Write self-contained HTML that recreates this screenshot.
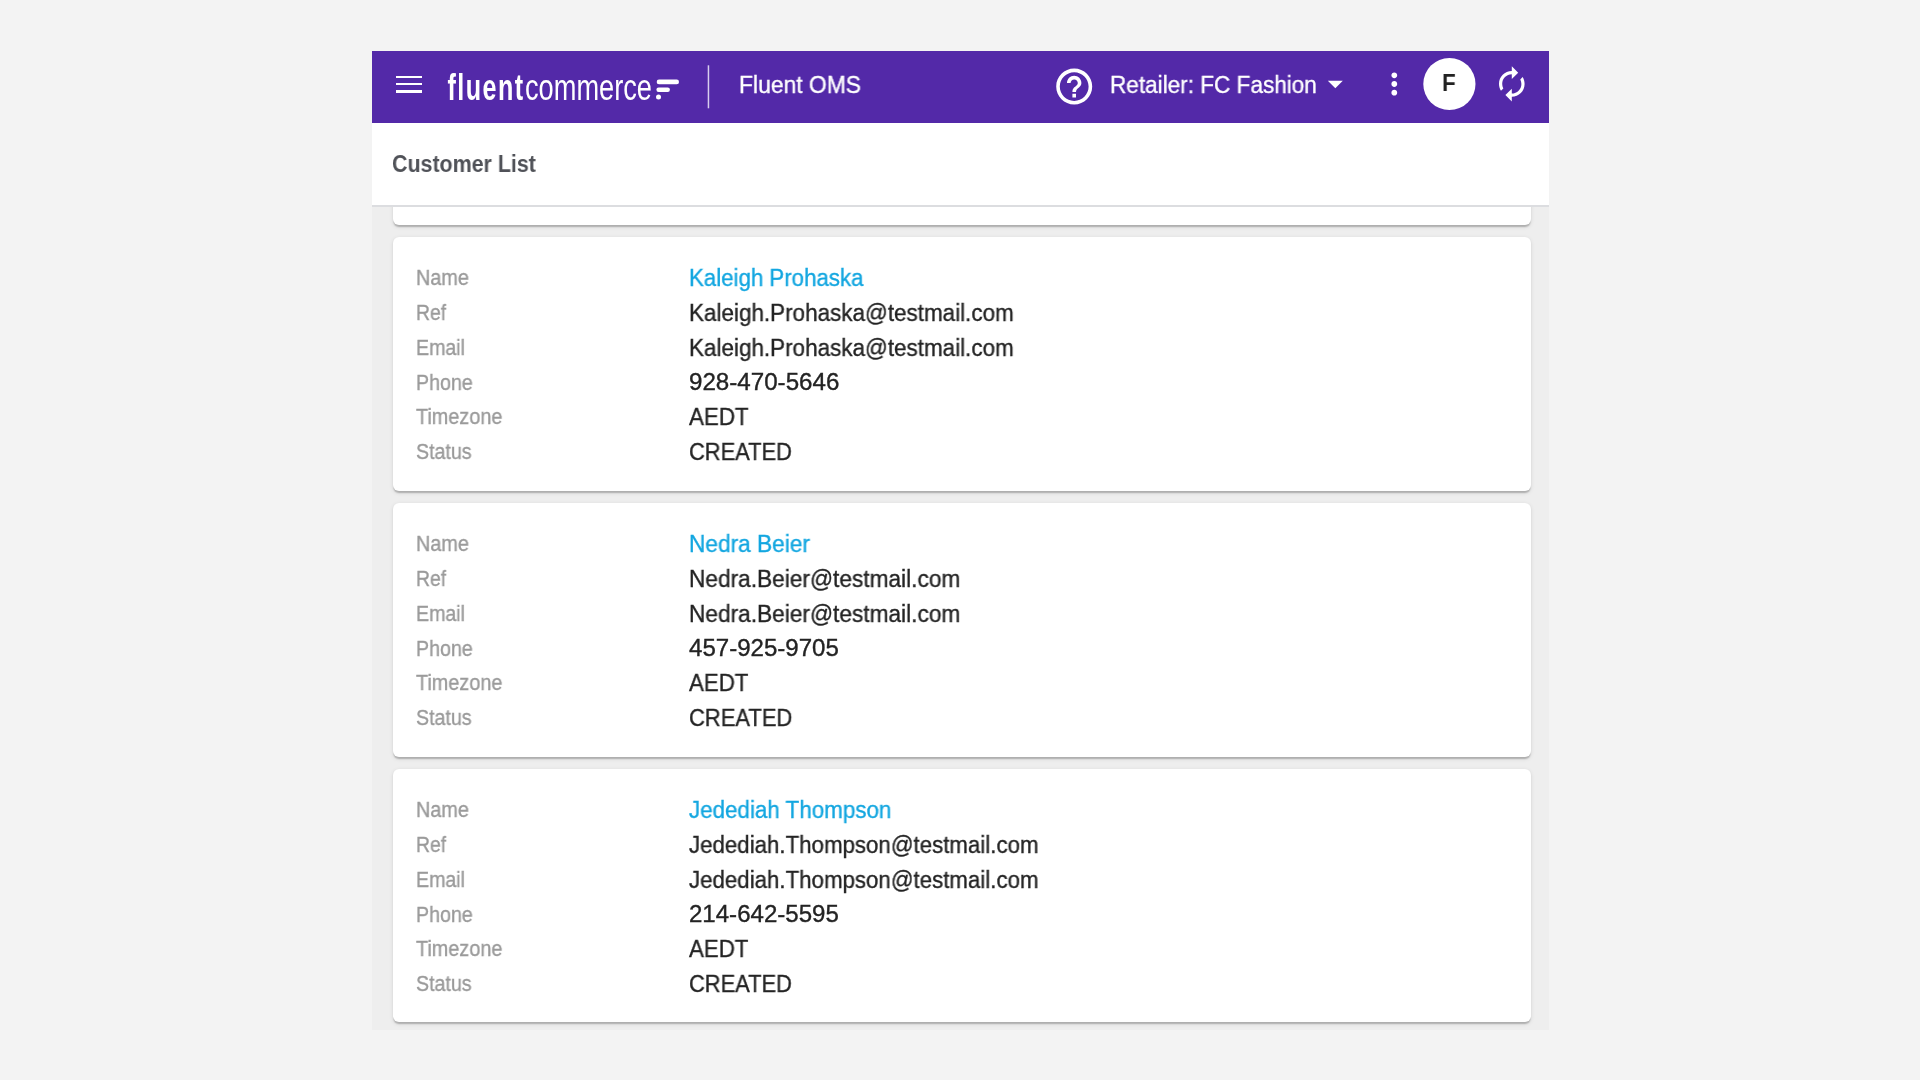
<!DOCTYPE html>
<html>
<head>
<meta charset="utf-8">
<style>
html,body{margin:0;padding:0;}
body{width:1920px;height:1080px;background:#f3f3f3;position:relative;overflow:hidden;font-family:"Liberation Sans",sans-serif;}
.t{position:absolute;white-space:nowrap;transform-origin:0 0;will-change:transform;-webkit-text-stroke:0.35px currentColor;}
.card{position:absolute;left:393px;width:1138px;height:254px;background:#fff;border-radius:6px;
 box-shadow:0 2.6px 1.5px -1.2px rgba(0,0,0,.13),0 1.3px 1.3px 0 rgba(0,0,0,.09),0 1.4px 4.4px 0 rgba(0,0,0,.10);}
</style>
</head>
<body>
<div style="position:absolute;left:371.5px;top:51px;width:1177.5px;height:979px;background:#eeeeee;"></div>
<div class="card" style="top:120px;height:105px;"></div>
<div class="card" style="top:237.3px;height:253.5px;"></div>
<div class="card" style="top:503.1px;height:253.5px;"></div>
<div class="card" style="top:768.9px;height:253.5px;"></div>
<div style="position:absolute;left:371.5px;top:123px;width:1177.5px;height:82px;background:#fff;border-bottom:2px solid #dcdde0;z-index:3"></div>
<div style="position:absolute;left:371.5px;top:51px;width:1177.5px;height:72px;background:#5329a8;z-index:4"></div>
<div style="position:absolute;left:396px;top:75.6px;width:26px;height:2.6px;background:#fff;z-index:5"></div>
<div style="position:absolute;left:396px;top:82.9px;width:26px;height:2.6px;background:#fff;z-index:5"></div>
<div style="position:absolute;left:396px;top:90.1px;width:26px;height:2.6px;background:#fff;z-index:5"></div>
<svg style="position:absolute;left:0;top:0;z-index:5;will-change:transform" width="1920" height="130">
<text transform="translate(447.5,100.1) scale(0.68,1)" x="0" y="0" font-family="Liberation Sans" font-weight="bold" font-size="37" fill="#fff" letter-spacing="2.1">fluent</text>
<text x="525" y="100.1" font-family="Liberation Sans" font-size="37" fill="#fff" textLength="127" lengthAdjust="spacingAndGlyphs">commerce</text>
<path d="M659 81.9 H676.7" stroke="#fff" stroke-width="4.6" stroke-linecap="round"/>
<path d="M658.6 89.7 H667.7" stroke="#fff" stroke-width="4.4" stroke-linecap="round"/>
<circle cx="658.5" cy="97.1" r="2.5" fill="#fff"/>
<rect x="707.7" y="65.3" width="1.5" height="43" fill="#d7cdee"/>
<g transform="translate(1052.6,65) scale(1.8)" fill="#fff"><path d="M11 18h2v-2h-2v2zm1-16C6.48 2 2 6.48 2 12s4.48 10 10 10 10-4.48 10-10S17.52 2 12 2zm0 18c-4.41 0-8-3.59-8-8s3.59-8 8-8 8 3.59 8 8-3.59 8-8 8zm0-14c-2.21 0-4 1.79-4 4h2c0-1.1.9-2 2-2s2 .9 2 2c0 2-3 1.75-3 5h2c0-2.25 3-2.5 3-5 0-2.21-1.79-4-4-4z"/></g>
<g transform="translate(1317.3,65.8) scale(1.5)" fill="#fff"><path d="M7 10l5 5 5-5z"/></g>
<g transform="translate(1376.9,66.6) scale(1.45)" fill="#fff"><path d="M12 8c1.1 0 2-.9 2-2s-.9-2-2-2-2 .9-2 2 .9 2 2 2zm0 2c-1.1 0-2 .9-2 2s.9 2 2 2 2-.9 2-2-.9-2-2-2zm0 6c-1.1 0-2 .9-2 2s.9 2 2 2 2-.9 2-2-.9-2-2-2z"/></g>
<circle cx="1449.4" cy="84" r="26.1" fill="#fff"/>
<g transform="translate(1492.6,64.7) scale(1.6)" fill="#fff"><path d="M12 6v3l4-4-4-4v3c-4.42 0-8 3.58-8 8 0 1.57.46 3.03 1.24 4.26L6.7 14.8c-.45-.83-.7-1.79-.7-2.8 0-3.310 2.69-6 6-6zm6.76 1.74L17.3 9.2c.44.84.7 1.790.7 2.8 0 3.31-2.69 6-6 6v-3l-4 4 4 4v-3c4.42 0 8-3.58 8-8 0-1.57-.46-3.03-1.24-4.26z"/></g>
</svg>
<div id="fluentoms" class="t" style="left:738.70px;top:73.39px;font-size:23.0px;line-height:25.691px;color:#ffffff;font-weight:normal;transform:scaleX(0.9948);z-index:5">Fluent OMS</div>
<div id="retailer" class="t" style="left:1109.54px;top:73.39px;font-size:23.0px;line-height:25.691px;color:#ffffff;font-weight:normal;transform:scaleX(0.9808);z-index:5">Retailer: FC Fashion</div>
<div id="avatarF" class="t" style="left:1442.04px;top:70.38px;font-size:24.0px;line-height:26.808px;color:#222222;font-weight:bold;-webkit-text-stroke:0;transform:scaleX(0.9350);z-index:5">F</div>
<div id="custlist" class="t" style="left:392.22px;top:152.30px;font-size:23.1px;line-height:25.803px;color:#505258;font-weight:bold;-webkit-text-stroke:0;transform:scaleX(0.9266);z-index:5">Customer List</div>
<div id="l00" class="t" style="left:415.60px;top:266.44px;font-size:21.2px;line-height:23.68px;color:#9a9a9a;font-weight:normal;transform:scaleX(0.9364);z-index:5">Name</div>
<div id="v00" class="t" style="left:689.10px;top:266.13px;font-size:23.0px;line-height:25.691px;color:#12a6e0;font-weight:normal;transform:scaleX(0.9675);z-index:5">Kaleigh Prohaska</div>
<div id="l01" class="t" style="left:415.60px;top:301.14px;font-size:21.2px;line-height:23.68px;color:#9a9a9a;font-weight:normal;transform:scaleX(0.9163);z-index:5">Ref</div>
<div id="v01" class="t" style="left:689.10px;top:300.83px;font-size:23.0px;line-height:25.691px;color:#232323;font-weight:normal;transform:scaleX(0.9762);z-index:5">Kaleigh.Prohaska@testmail.com</div>
<div id="l02" class="t" style="left:415.60px;top:335.84px;font-size:21.2px;line-height:23.68px;color:#9a9a9a;font-weight:normal;transform:scaleX(0.9243);z-index:5">Email</div>
<div id="v02" class="t" style="left:689.10px;top:335.53px;font-size:23.0px;line-height:25.691px;color:#232323;font-weight:normal;transform:scaleX(0.9762);z-index:5">Kaleigh.Prohaska@testmail.com</div>
<div id="l03" class="t" style="left:415.60px;top:370.54px;font-size:21.2px;line-height:23.68px;color:#9a9a9a;font-weight:normal;transform:scaleX(0.9252);z-index:5">Phone</div>
<div id="v03" class="t" style="left:689.10px;top:370.23px;font-size:23.0px;line-height:25.691px;color:#232323;font-weight:normal;transform:scaleX(1.0499);z-index:5">928-470-5646</div>
<div id="l04" class="t" style="left:415.60px;top:405.24px;font-size:21.2px;line-height:23.68px;color:#9a9a9a;font-weight:normal;transform:scaleX(0.9362);z-index:5">Timezone</div>
<div id="v04" class="t" style="left:689.10px;top:404.93px;font-size:23.0px;line-height:25.691px;color:#232323;font-weight:normal;transform:scaleX(0.9724);z-index:5">AEDT</div>
<div id="l05" class="t" style="left:415.60px;top:439.94px;font-size:21.2px;line-height:23.68px;color:#9a9a9a;font-weight:normal;transform:scaleX(0.9248);z-index:5">Status</div>
<div id="v05" class="t" style="left:689.10px;top:439.63px;font-size:23.0px;line-height:25.691px;color:#232323;font-weight:normal;transform:scaleX(0.9513);z-index:5">CREATED</div>
<div id="l10" class="t" style="left:415.60px;top:532.44px;font-size:21.2px;line-height:23.68px;color:#9a9a9a;font-weight:normal;transform:scaleX(0.9364);z-index:5">Name</div>
<div id="v10" class="t" style="left:689.10px;top:532.13px;font-size:23.0px;line-height:25.691px;color:#12a6e0;font-weight:normal;transform:scaleX(0.9860);z-index:5">Nedra Beier</div>
<div id="l11" class="t" style="left:415.60px;top:567.14px;font-size:21.2px;line-height:23.68px;color:#9a9a9a;font-weight:normal;transform:scaleX(0.9163);z-index:5">Ref</div>
<div id="v11" class="t" style="left:689.10px;top:566.83px;font-size:23.0px;line-height:25.691px;color:#232323;font-weight:normal;transform:scaleX(0.9860);z-index:5">Nedra.Beier@testmail.com</div>
<div id="l12" class="t" style="left:415.60px;top:601.84px;font-size:21.2px;line-height:23.68px;color:#9a9a9a;font-weight:normal;transform:scaleX(0.9243);z-index:5">Email</div>
<div id="v12" class="t" style="left:689.10px;top:601.53px;font-size:23.0px;line-height:25.691px;color:#232323;font-weight:normal;transform:scaleX(0.9860);z-index:5">Nedra.Beier@testmail.com</div>
<div id="l13" class="t" style="left:415.60px;top:636.54px;font-size:21.2px;line-height:23.68px;color:#9a9a9a;font-weight:normal;transform:scaleX(0.9252);z-index:5">Phone</div>
<div id="v13" class="t" style="left:689.10px;top:636.23px;font-size:23.0px;line-height:25.691px;color:#232323;font-weight:normal;transform:scaleX(1.0457);z-index:5">457-925-9705</div>
<div id="l14" class="t" style="left:415.60px;top:671.24px;font-size:21.2px;line-height:23.68px;color:#9a9a9a;font-weight:normal;transform:scaleX(0.9362);z-index:5">Timezone</div>
<div id="v14" class="t" style="left:689.10px;top:670.93px;font-size:23.0px;line-height:25.691px;color:#232323;font-weight:normal;transform:scaleX(0.9684);z-index:5">AEDT</div>
<div id="l15" class="t" style="left:415.60px;top:705.94px;font-size:21.2px;line-height:23.68px;color:#9a9a9a;font-weight:normal;transform:scaleX(0.9248);z-index:5">Status</div>
<div id="v15" class="t" style="left:689.10px;top:705.63px;font-size:23.0px;line-height:25.691px;color:#232323;font-weight:normal;transform:scaleX(0.9548);z-index:5">CREATED</div>
<div id="l20" class="t" style="left:415.60px;top:798.44px;font-size:21.2px;line-height:23.68px;color:#9a9a9a;font-weight:normal;transform:scaleX(0.9364);z-index:5">Name</div>
<div id="v20" class="t" style="left:689.10px;top:798.13px;font-size:23.0px;line-height:25.691px;color:#12a6e0;font-weight:normal;transform:scaleX(0.9725);z-index:5">Jedediah Thompson</div>
<div id="l21" class="t" style="left:415.60px;top:833.14px;font-size:21.2px;line-height:23.68px;color:#9a9a9a;font-weight:normal;transform:scaleX(0.9163);z-index:5">Ref</div>
<div id="v21" class="t" style="left:689.10px;top:832.83px;font-size:23.0px;line-height:25.691px;color:#232323;font-weight:normal;transform:scaleX(0.9684);z-index:5">Jedediah.Thompson@testmail.com</div>
<div id="l22" class="t" style="left:415.60px;top:867.84px;font-size:21.2px;line-height:23.68px;color:#9a9a9a;font-weight:normal;transform:scaleX(0.9243);z-index:5">Email</div>
<div id="v22" class="t" style="left:689.10px;top:867.53px;font-size:23.0px;line-height:25.691px;color:#232323;font-weight:normal;transform:scaleX(0.9684);z-index:5">Jedediah.Thompson@testmail.com</div>
<div id="l23" class="t" style="left:415.60px;top:902.54px;font-size:21.2px;line-height:23.68px;color:#9a9a9a;font-weight:normal;transform:scaleX(0.9252);z-index:5">Phone</div>
<div id="v23" class="t" style="left:689.10px;top:902.23px;font-size:23.0px;line-height:25.691px;color:#232323;font-weight:normal;transform:scaleX(1.0456);z-index:5">214-642-5595</div>
<div id="l24" class="t" style="left:415.60px;top:937.24px;font-size:21.2px;line-height:23.68px;color:#9a9a9a;font-weight:normal;transform:scaleX(0.9362);z-index:5">Timezone</div>
<div id="v24" class="t" style="left:689.10px;top:936.93px;font-size:23.0px;line-height:25.691px;color:#232323;font-weight:normal;transform:scaleX(0.9684);z-index:5">AEDT</div>
<div id="l25" class="t" style="left:415.60px;top:971.94px;font-size:21.2px;line-height:23.68px;color:#9a9a9a;font-weight:normal;transform:scaleX(0.9248);z-index:5">Status</div>
<div id="v25" class="t" style="left:689.10px;top:971.63px;font-size:23.0px;line-height:25.691px;color:#232323;font-weight:normal;transform:scaleX(0.9513);z-index:5">CREATED</div>
</body>
</html>
